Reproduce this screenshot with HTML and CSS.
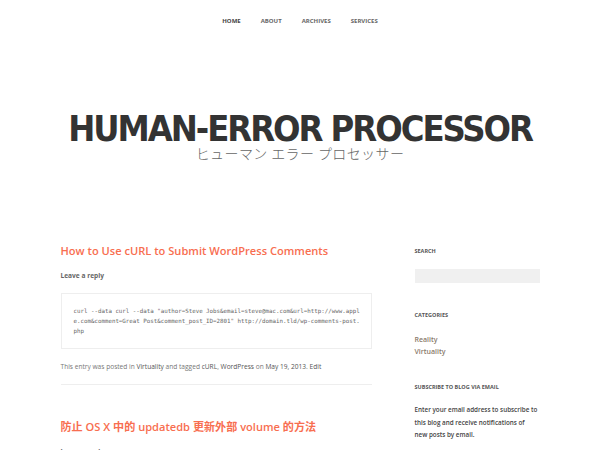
FILE: index.html
```html
<!DOCTYPE html>
<html>
<head>
<meta charset="utf-8">
<link rel="stylesheet" href="styles.css">
</head>
<body>
<nav class="nav">
  <a class="nav-item active">HOME</a>
  <a class="nav-item">ABOUT</a>
  <a class="nav-item">ARCHIVES</a>
  <a class="nav-item">SERVICES</a>
</nav>
<header class="masthead">
  <h1 class="site-title">HUMAN-ERROR PROCESSOR</h1>
  <p class="site-desc">ヒューマン エラー プロセッサー</p>
</header>
<div class="wrap">
  <main class="content">
    <article class="post">
      <h2 class="post-title">How to Use cURL to Submit WordPress Comments</h2>
      <p class="reply">Leave a reply</p>
      <pre class="code">curl --data curl --data "author=Steve Jobs&amp;email=steve@mac.com&amp;url=http://www.appl
e.com&amp;comment=Great Post&amp;comment_post_ID=2801" http://domain.tld/wp-comments-post.
php</pre>
      <p class="meta">This entry was posted in <a class="mlink">Virtuality</a> and tagged <a class="mlink">cURL</a>, <a class="mlink">WordPress</a> on <a class="mlink">May 19, 2013</a>. <a class="mlink">Edit</a></p>
    </article>
    <article class="post second">
      <h2 class="post-title">防止 OS X 中的 updatedb 更新外部 volume 的方法</h2>
      <p class="reply">Leave a reply</p>
    </article>
  </main>
  <aside class="sidebar">
    <h3 class="widget-title">SEARCH</h3>
    <div class="search"></div>
    <h3 class="widget-title cat">CATEGORIES</h3>
    <ul class="cats">
      <li>Reality</li>
      <li>Virtuality</li>
    </ul>
    <h3 class="widget-title sub">SUBSCRIBE TO BLOG VIA EMAIL</h3>
    <p class="sub-text">Enter your email address to subscribe to this blog and receive notifications of new posts by email.</p>
  </aside>
</div>
</body>
</html>
```
FILE: styles.css
```css
* { box-sizing: border-box; }
html, body { margin: 0; padding: 0; background: #fff; }
body { font-family: "Open Sans", "Noto Sans CJK SC", sans-serif; color: #555; overflow: hidden; height: 450px; }
.nav { display: flex; justify-content: center; gap: 20px; padding-top: 17px; height: 30px; }
.nav-item { font-size: 6px; font-weight: 700; color: #666; line-height: 8px; }
.nav-item.active { color: #444; }
.masthead { text-align: center; padding-top: 84px; height: 212px; }
.site-title { margin: 0; font-family: "DejaVu Sans Condensed", "DejaVu Sans", sans-serif; font-stretch: condensed; font-weight: 700; font-size: 36px; line-height: 30px; color: #333; letter-spacing: -2.05px; }
.site-desc { margin: 0; font-family: "Noto Sans CJK JP", sans-serif; font-weight: 300; font-size: 14px; line-height: 18px; color: #666; letter-spacing: 0.4px; }
.wrap { width: 479px; margin: 0 auto; display: flex; gap: 43px; }
.content { width: 311px; }
.sidebar { width: 125px; padding-top: 5px; }
.post-title { margin: 0; font-size: 11.1px; font-weight: 600; color: #f86e50; line-height: 18px; white-space: nowrap; }
.reply { margin: 11px 0 0; font-size: 6.6px; font-weight: 700; color: #666; line-height: 10px; }
.code { margin: 12px 0 0; border: 1px solid #eee; padding: 12px 12px 12px; font-family: "DejaVu Sans Mono", monospace; font-size: 5.8px; line-height: 10px; color: #666; white-space: pre; }
.meta { margin: 13px 0 0; font-size: 6.6px; color: #777; line-height: 10px; padding-bottom: 12px; border-bottom: 1px solid #eee; }
.mlink { color: #555; }
.second { margin-top: 33px; }
.widget-title { margin: 0; font-size: 5.5px; font-weight: 700; color: #555; line-height: 8px; }
.search { margin-top: 14px; height: 14px; background: #f0f0f0; }
.cat { margin-top: 28px; }
.cats { list-style: none; margin: 15px 0 0; padding: 0; font-size: 7px; font-weight: 600; color: #8a7a6a; line-height: 12px; }
.sub { margin-top: 25px; }
.sub-text { margin: 13px 0 0; width: 123px; font-size: 6.3px; font-weight: 600; color: #444; line-height: 12.5px; }
```
